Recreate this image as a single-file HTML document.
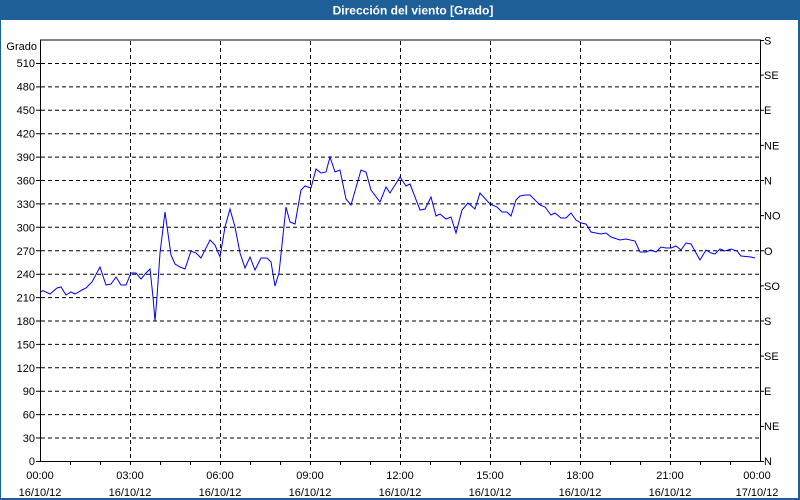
<!DOCTYPE html>
<html><head><meta charset="utf-8"><style>
html,body{margin:0;padding:0;background:#fff;}
svg{display:block;font-family:"Liberation Sans","DejaVu Sans",sans-serif;}
</style></head><body>
<svg width="800" height="500" viewBox="0 0 800 500" xmlns="http://www.w3.org/2000/svg">
<rect x="0" y="0" width="800" height="500" fill="#fff"/>
<rect x="0" y="0" width="800" height="20" fill="#1f5f98"/>
<rect x="0" y="0" width="1" height="500" fill="#1f5f98"/>
<rect x="798" y="0" width="2" height="500" fill="#1f5f98"/>
<rect x="0" y="498" width="800" height="2" fill="#1f5f98"/>
<text x="413" y="14.5" fill="#fff" font-size="12" font-weight="bold" text-anchor="middle">Dirección del viento [Grado]</text>
<g stroke="#000" stroke-width="1" stroke-dasharray="4,3" fill="none">
<path d="M41 63.5H760M41 86.9H760M41 110.3H760M41 133.7H760M41 157.1H760M41 180.5H760M41 203.9H760M41 227.3H760M41 250.7H760M41 274.2H760M41 297.6H760M41 321H760M41 344.4H760M41 367.8H760M41 391.2H760M41 414.6H760M41 438H760"/>
<path d="M130.5 41V461M220.5 41V461M310.5 41V461M400.5 41V461M490.5 41V461M580.5 41V461M670.5 41V461"/>
</g>
<g stroke="#000" stroke-width="1" fill="none">
<path d="M40.5 40V461.5H760.5V40H40"/>
<path d="M36 461.5H40M36 438H40M36 414.6H40M36 391.2H40M36 367.8H40M36 344.4H40M36 321H40M36 297.6H40M36 274.2H40M36 250.7H40M36 227.3H40M36 203.9H40M36 180.5H40M36 157.1H40M36 133.7H40M36 110.3H40M36 86.9H40M36 63.5H40"/>
<path d="M760 461.5H764M760 426.4H764M760 391.2H764M760 356.1H764M760 321H764M760 285.9H764M760 250.7H764M760 215.6H764M760 180.5H764M760 145.4H764M760 110.3H764M760 75.1H764M760 40.5H764"/>
<path d="M70.5 461V465M100.5 461V465M130.5 461V465M160.5 461V465M190.5 461V465M220.5 461V465M250.5 461V465M280.5 461V465M310.5 461V465M340.5 461V465M370.5 461V465M400.5 461V465M430.5 461V465M460.5 461V465M490.5 461V465M520.5 461V465M550.5 461V465M580.5 461V465M610.5 461V465M640.5 461V465M670.5 461V465M700.5 461V465M730.5 461V465"/>
</g>
<g font-size="11" fill="#000" text-anchor="end">
<text x="37" y="50">Grado</text>
<text x="35" y="67">510</text><text x="35" y="90.5">480</text><text x="35" y="114">450</text><text x="35" y="137.5">420</text><text x="35" y="161">390</text><text x="35" y="184.5">360</text><text x="35" y="208">330</text><text x="35" y="231.5">300</text><text x="35" y="255">270</text><text x="35" y="278">240</text><text x="35" y="301.5">210</text><text x="35" y="325">180</text><text x="35" y="348.5">150</text><text x="35" y="372">120</text><text x="35" y="395">90</text><text x="35" y="418.5">60</text><text x="35" y="442">30</text><text x="35" y="465">0</text>
</g>
<g font-size="11" fill="#000">
<text x="764" y="465">N</text><text x="764" y="430">NE</text><text x="764" y="395">E</text><text x="764" y="360">SE</text><text x="764" y="325">S</text><text x="764" y="290">SO</text><text x="764" y="255">O</text><text x="764" y="219.5">NO</text><text x="764" y="184.5">N</text><text x="764" y="149.5">NE</text><text x="764" y="114">E</text><text x="764" y="79">SE</text><text x="764" y="44.5">S</text>
</g>
<g font-size="11" fill="#000" text-anchor="middle">
<text x="40" y="479">00:00</text><text x="40" y="496">16/10/12</text>
<text x="130" y="479">03:00</text><text x="130" y="496">16/10/12</text>
<text x="220" y="479">06:00</text><text x="220" y="496">16/10/12</text>
<text x="310" y="479">09:00</text><text x="310" y="496">16/10/12</text>
<text x="400" y="479">12:00</text><text x="400" y="496">16/10/12</text>
<text x="490" y="479">15:00</text><text x="490" y="496">16/10/12</text>
<text x="580" y="479">18:00</text><text x="580" y="496">16/10/12</text>
<text x="670" y="479">21:00</text><text x="670" y="496">16/10/12</text>
<text x="757" y="479">00:00</text><text x="757" y="496">17/10/12</text>
</g>
<polyline fill="none" stroke="#0000ee" stroke-width="1" points="41,291.7 43,290.7 50,294 57,288 61,287 66,295 71,292 75,294 82,290 86,288 92,282 100,267 106,285 111,284 116,277 121,285 126,285 131,273 136,273 141,279 146,273 150,269 153,297 155,321 157,297 160,253 165,212 171,255 175,264 180,267 185,269 191,251 196,253 201,258 210,240 215,245 220,257 225,227 230,209 235,227 240,253 245,268 250,257 255,270 261,258 267,258 271,262 275,286 279,273 286,207 290,222 295,224 301,190 305,186 311,188 316,169 321,173 326,172 330,157 335,172 340,170 346,199 351,205 361,170 366,172 371,190 380,202 386,187 390,193 400,177 406,186 410,184 420,210 425,209 431,197 436,216 440,214 446,219 451,217 456,233 462,210 468,203 475,209 480,193 490,204 497,207 502,212 507,212 511,216 516,200 520,196 525,195 530,195 540,205 545,207 551,215 555,213 561,218 566,218 571,213 576,220 581,223 586,224 591,232 601,234 606,233 611,237 620,240 626,239 635,241 640,252 646,252 651,250 656,252 661,247 666,248 671,248 676,246 681,250 686,243 691,244 700,260 706,250 711,253 715,254 720,249 725,251 731,249 737,251 741,256 751,257 755,258"/>
</svg>
</body></html>
